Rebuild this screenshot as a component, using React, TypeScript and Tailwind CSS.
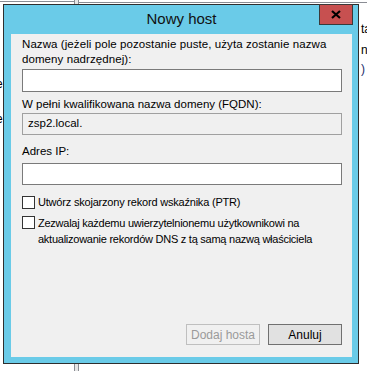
import React from "react";

export default function App() {
  return (
    <div className="relative w-[367px] h-[371px] bg-white overflow-hidden font-['Liberation_Sans',Arial,sans-serif] text-[12px] text-black">
      {/* background desktop details */}
      <div className="absolute left-0 top-[1px] w-[74px] h-[1px] bg-[#8a8d94]" />
      <div className="absolute left-[74px] top-0 w-[5px] h-[4px] border-x border-[#8a8d94] bg-[#e6e6e6]" />
      <div className="absolute left-[79px] top-[2px] w-[290px] h-[1px] bg-[#8a8d94]" />
      <div className="absolute left-[74px] top-[364px] w-[5px] h-[7px] border-x border-[#8a8d94] bg-[#e6e6e6]" />
      <div className="absolute left-[361px] top-[22px] text-[12px] leading-[15px]">ta</div>
      <div className="absolute left-[361px] top-[43px] text-[12px] leading-[15px]">n</div>
      <div className="absolute left-[361px] top-[62px] text-[12px] leading-[15px] text-[#1a2a6a]">)</div>
      <div className="absolute left-[-4px] top-[77px] text-[12px] leading-[15px]">e</div>
      <div className="absolute left-[-4px] top-[112px] text-[12px] leading-[15px]">e</div>

      {/* window */}
      <div className="absolute left-[3px] top-[4px] w-[356px] h-[360px] border border-[#2e2e2e] bg-[#6acbe8] flex flex-col pl-[7px] pr-[6px] pb-[6px]">
        <div className="h-[29px] shrink-0 relative flex items-center justify-center">
          <span className="text-[15px] leading-[18px] mt-[-1px] text-[#111]">Nowy host</span>
          <div className="absolute right-[-1px] top-[-1px] w-[34px] h-[21px] bg-[#c75050] border border-[#3a3a3a] flex items-center justify-center">
            <svg width="10" height="9" viewBox="0 0 10 9">
              <path d="M1 1 L9 8 M9 1 L1 8" stroke="#000" strokeWidth="2.2" />
            </svg>
          </div>
        </div>
        <div className="w-[341px] h-[323px] bg-[#f0f0f0] pl-[11px] pr-[10px] pt-[3px] flex flex-col text-[11.5px]">
          <div className="leading-[15px] whitespace-nowrap tracking-[0.08px]">
            Nazwa (jeżeli pole pozostanie puste, użyta zostanie nazwa
            <br />
            domeny nadrzędnej):
          </div>
          <div className="mt-[2px] h-[23px] bg-white border border-[#7a7a7a]" />
          <div className="mt-[5px] leading-[15px] whitespace-nowrap">W pełni kwalifikowana nazwa domeny (FQDN):</div>
          <div className="mt-[1px] h-[22px] border border-[#a0a0a0] bg-[#f0f0f0] pl-[5px] flex items-center">
            zsp2.local.
          </div>
          <div className="mt-[9px] leading-[15px]">Adres IP:</div>
          <div className="mt-[4px] h-[22px] bg-white border border-[#7a7a7a]" />
          <div className="mt-[10px] flex items-start">
            <div className="mt-[1px] w-[13px] h-[13px] shrink-0 bg-white border border-[#333]" />
            <div className="ml-[3px] leading-[15px] whitespace-nowrap text-[11px] tracking-[-0.2px]">Utwórz skojarzony rekord wskaźnika (PTR)</div>
          </div>
          <div className="mt-[5px] flex items-start">
            <div className="mt-[1px] w-[13px] h-[13px] shrink-0 bg-white border border-[#333]" />
            <div className="ml-[3px] leading-[16px] whitespace-nowrap text-[11px] tracking-[-0.25px]">
              Zezwalaj każdemu uwierzytelnionemu użytkownikowi na
              <br />
              aktualizowanie rekordów DNS z tą samą nazwą właściciela
            </div>
          </div>
          <div className="mt-auto mb-[12px] flex justify-end gap-[8px] text-[12px]">
            <div className="w-[74px] h-[21px] border border-[#bfbfbf] bg-[#f0f0f0] text-[#9a9a9a] flex items-center justify-center">
              Dodaj hosta
            </div>
            <div className="w-[74px] h-[21px] border border-[#707070] bg-[#e1e1e1] flex items-center justify-center">
              Anuluj
            </div>
          </div>
        </div>
      </div>
    </div>
  );
}
